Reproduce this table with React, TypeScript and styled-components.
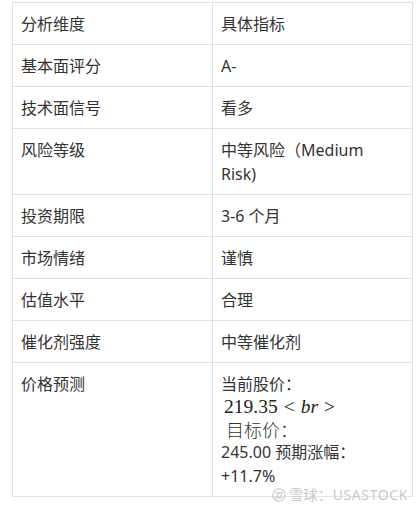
import React from "react";
import styled, { createGlobalStyle } from "styled-components";

const Global = createGlobalStyle`
  html, body { margin: 0; padding: 0; background: #ffffff; }
  body {
    font-family: "Segoe UI", "Noto Sans", "Noto Sans CJK SC", sans-serif;
    color: #333333;
    font-size: 16px;
  }
`;

const Page = styled.div`
  position: relative;
  width: 420px;
  height: 507px;
  padding: 2px 0 0 12px;
  box-sizing: border-box;
  overflow: hidden;
`;

const Table = styled.table`
  border-collapse: collapse;
  width: 401px;
  table-layout: fixed;
`;

const Cell = styled.td<{ $w?: number }>`
  border: 1px solid #dfe2e5;
  padding: 8.5px 8px;
  line-height: 24px;
  vertical-align: top;
  font-size: 16px;
  ${(p) => (p.$w ? `width: ${p.$w}px;` : "")}
`;

const Line = styled.span<{ $h?: number; $indent?: number }>`
  display: block;
  height: ${(p) => p.$h ?? 24}px;
  line-height: ${(p) => p.$h ?? 24}px;
  padding-left: ${(p) => p.$indent ?? 0}px;
  white-space: nowrap;
`;

const Math = styled.span`
  font-family: "Liberation Serif", "DejaVu Serif", serif;
  font-size: 19.5px;
  color: #222;
`;

const MathText = styled.span`
  font-family: "Noto Sans CJK SC", sans-serif;
  font-size: 18px;
  font-weight: 300;
  color: #333;
`;

const Rel = styled.span`
  margin: 0 6px;
`;

const It = styled.i`
  font-style: italic;
`;

const Watermark = styled.div`
  position: absolute;
  right: 12px;
  bottom: 5px;
  display: flex;
  align-items: center;
  gap: 3px;
  color: #c9c9c9;
  font-size: 14px;
  line-height: 15px;
  font-family: "Noto Sans", "Noto Sans CJK SC", sans-serif;
  letter-spacing: 0.6px;
  text-shadow: 0 0 2px #fff, 0 0 2px #fff;
`;

const rows: [string, React.ReactNode][] = [
  ["基本面评分", "A-"],
  ["技术面信号", "看多"],
  [
    "风险等级",
    <>
      中等风险（Medium
      <br />
      Risk)
    </>,
  ],
  ["投资期限", "3-6 个月"],
  ["市场情绪", "谨慎"],
  ["估值水平", "合理"],
  ["催化剂强度", "中等催化剂"],
];

const Logo = () => (
  <svg width="14" height="14" viewBox="0 0 13 13" fill="none">
    <circle cx="6.5" cy="6.5" r="5.8" stroke="#c9c9c9" strokeWidth="1.1" />
    <path d="M3.5 5.2c0.4-1.4 2.4-1.6 2.6-0.2 0.2 1.2-2.6 2.6-2.6 4.2h2.8" stroke="#c9c9c9" strokeWidth="1" />
    <path d="M6.8 5.2c0.4-1.4 2.4-1.6 2.6-0.2 0.2 1.2-2.6 2.6-2.6 4.2h2.8" stroke="#c9c9c9" strokeWidth="1" />
  </svg>
);

export default function App() {
  return (
    <Page>
      <Global />
      <Table>
        <tbody>
          <tr>
            <Cell $w={183}>分析维度</Cell>
            <Cell>具体指标</Cell>
          </tr>
          {rows.map(([a, b]) => (
            <tr key={a}>
              <Cell>{a}</Cell>
              <Cell>{b}</Cell>
            </tr>
          ))}
          <tr>
            <Cell>价格预测</Cell>
            <Cell>
              <Line>当前股价：</Line>
              <Line $h={22} $indent={3}>
                <Math>
                  219.35<Rel>&lt;</Rel>
                  <It>br</It>
                  <Rel>&gt;</Rel>
                </Math>
              </Line>
              <Line $h={22} $indent={5}>
                <MathText>目标价：</MathText>
              </Line>
              <Line>245.00 预期涨幅：</Line>
              <Line>+11.7%</Line>
            </Cell>
          </tr>
        </tbody>
      </Table>
      <Watermark>
        <Logo />
        <span>雪球：USASTOCK</span>
      </Watermark>
    </Page>
  );
}
